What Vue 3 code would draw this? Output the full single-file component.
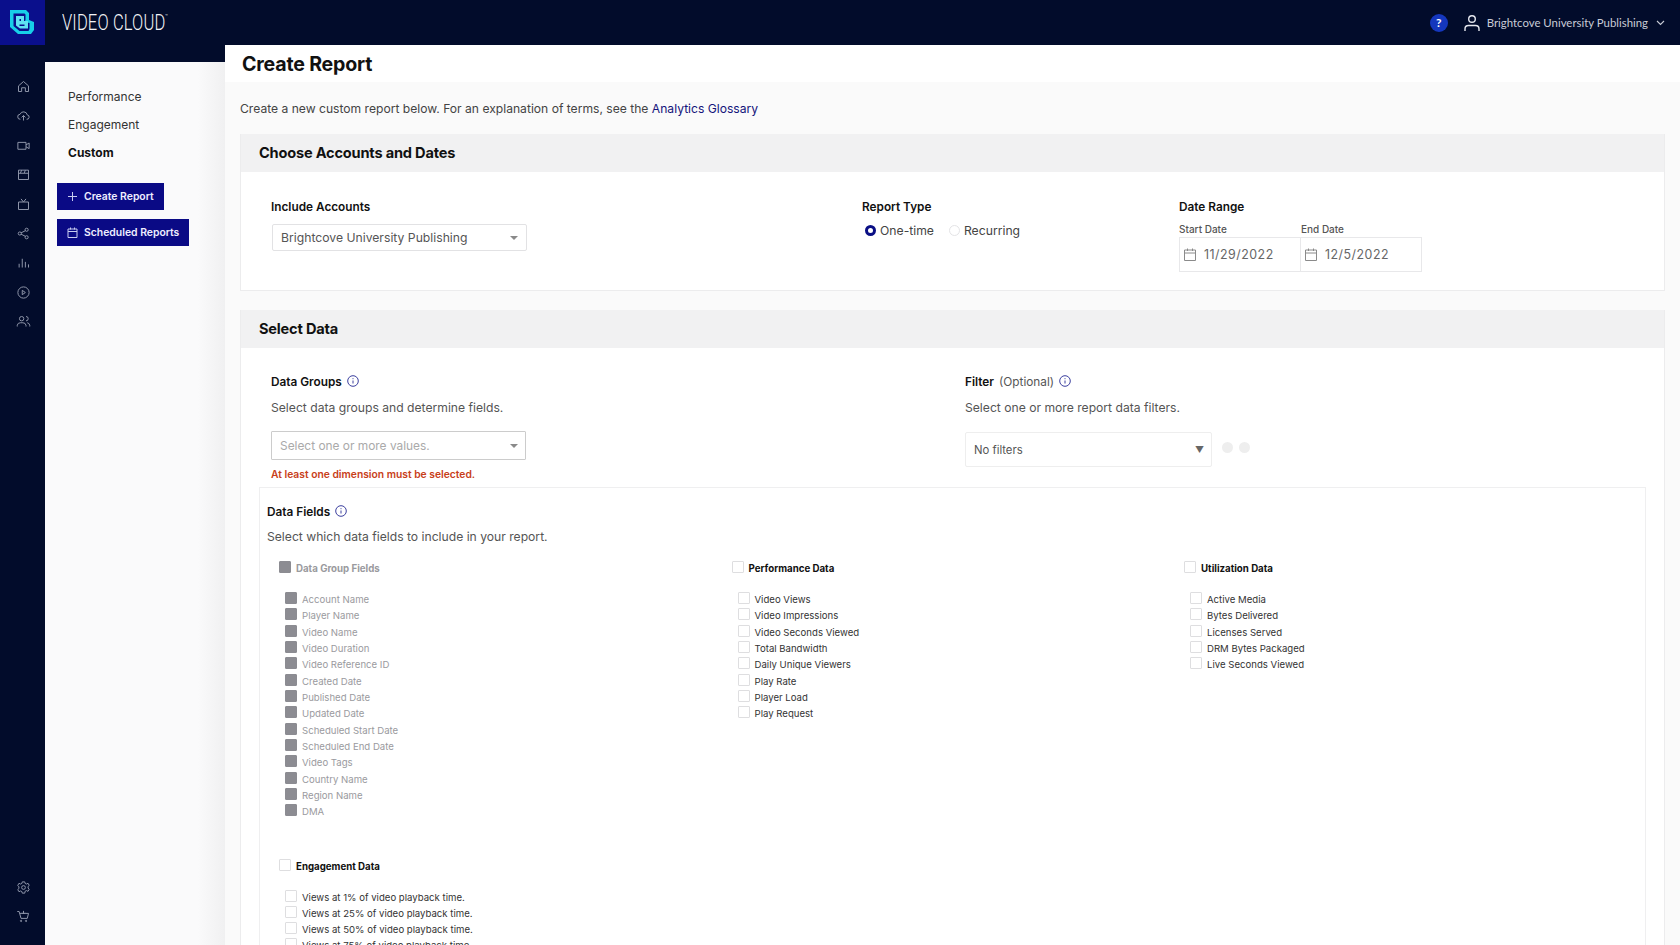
<script setup>
const railTop = [
  'M4 11l8-7 8 7v9h-5v-6H9v6H4z',
  'M7 18a4 4 0 0 1-.5-8 6 6 0 0 1 11.5 1 3.5 3.5 0 0 1-1 7M12 20v-8M9 15l3-3 3 3',
  'M3 7h13v11H3zM16 11l5-3v9l-5-3',
  'M4 5h16v15H4zM4 10h16M9 5l-2 5M15 5l-2 5',
  'M4 8h16v12H4zM8 3l4 5 4-5',
  'M6 9.5a2.5 2.5 0 1 0 0 5 2.5 2.5 0 0 0 0-5zM17 3.5a2.5 2.5 0 1 0 0 5 2.5 2.5 0 0 0 0-5zM17 15.5a2.5 2.5 0 1 0 0 5 2.5 2.5 0 0 0 0-5zM8 11l7-3.5M8 13l7 3.5',
  'M5 20v-6M10 20V6M15 20v-9M20 20v-5',
  'M12 3a9 9 0 1 0 0 18 9 9 0 0 0 0-18zM10 8.500l5 3.500-5 3.500z',
  'M9 4a3.500 3.500 0 1 0 0 7 3.500 3.500 0 0 0 0-7zM2 20v-2a5 5 0 0 1 5-4h4a5 5 0 0 1 5 4v2M16 4a3.500 3.500 0 0 1 0 7M18 14a5 5 0 0 1 4 4v2'
]
const railBottom = [
  'M12 9a3 3 0 1 0 0 6 3 3 0 0 0 0-6zM10 3h4l.6 2.500 2.400 1 2.200-1.300 2 3.500-1.900 1.700v2.600l1.900 1.700-2 3.500-2.200-1.300-2.400 1L14 21h-4l-.6-2.500-2.400-1-2.200 1.300-2-3.500 1.900-1.700v-2.600L2.800 8.700l2-3.500L7 6.500l2.400-1z',
  'M2 4h3l3 11h10l2-8H6M9 19a1 1 0 1 0 0 .1zM17 19a1 1 0 1 0 0 .1zM12 3v5M10 6l2 2 2-2'
]
const nav = ['Performance', 'Engagement', 'Custom']
const groupFields = ['Account Name','Player Name','Video Name','Video Duration','Video Reference ID','Created Date','Published Date','Updated Date','Scheduled Start Date','Scheduled End Date','Video Tags','Country Name','Region Name','DMA']
const perfFields = ['Video Views','Video Impressions','Video Seconds Viewed','Total Bandwidth','Daily Unique Viewers','Play Rate','Player Load','Play Request']
const utilFields = ['Active Media','Bytes Delivered','Licenses Served','DRM Bytes Packaged','Live Seconds Viewed']
const engFields = ['Views at 1% of video playback time.','Views at 25% of video playback time.','Views at 50% of video playback time.','Views at 75% of video playback time.']
const columns = [
  { title: 'Performance Data', items: perfFields },
  { title: 'Utilization Data', items: utilFields }
]
</script>

<template>
  <div class="app">
    <header class="topbar">
      <div class="logo">
        <svg width="25" height="25" viewBox="0 0 25 25" fill="none">
          <path d="M0 0h16l3 3v7l5 2v8l-3 4H8l-8-7z" fill="#17cfe8"/>
          <path d="M3.500 3.500h11l1 1V10l-1 2 5 1v6l-1 2H9.500l-6-5z" fill="#0a0f8c"/>
          <path d="M6 6h8v5h4v7.500H10l-4-3z" fill="#5fe3f2"/>
          <path d="M9.500 9h1.500v2H9.500zM9.500 14.500h5v1.500h-5z" fill="#0a0f8c"/>
        </svg>
      </div>
      <div class="brand">VIDEO CLOUD<sup>™</sup></div>
      <div class="top-right">
        <span class="help">?</span>
        <svg class="user" width="18" height="18" viewBox="0 0 18 18" fill="none" stroke="#e6e8ef" stroke-width="1.400">
          <circle cx="9" cy="5" r="3.300"/><path d="M2 17v-2c0-2 1.500-3.500 3.500-3.500h7c2 0 3.500 1.500 3.500 3.500v2"/>
        </svg>
        <span class="acct">Brightcove University Publishing</span>
        <svg width="9" height="6" viewBox="0 0 9 6" fill="none" stroke="#c8cbd6" stroke-width="1.100"><path d="M1 1l3.500 3.500L8 1"/></svg>
      </div>
    </header>

    <div class="shell">
      <aside class="rail">
        <div class="rail-group">
          <svg v-for="d in railTop" :key="d" width="15" height="15" viewBox="0 0 24 24" fill="none" stroke="#8d94a8" stroke-width="1.600"><path :d="d"/></svg>
        </div>
        <div class="rail-group">
          <svg v-for="d in railBottom" :key="d" width="15" height="15" viewBox="0 0 24 24" fill="none" stroke="#8d94a8" stroke-width="1.600"><path :d="d"/></svg>
        </div>
      </aside>

      <div class="side-wrap">
        <nav class="side">
          <a v-for="n in nav" :key="n" class="nav-item" :class="{ active: n === 'Custom' }">{{ n }}</a>
          <button class="btn first">
            <svg width="11" height="9" viewBox="0 0 11 9" stroke="#c9cdf0" stroke-width="1"><path d="M5.500 0v9M1 4.500h9"/></svg>
            Create Report
          </button>
          <button class="btn">
            <svg width="11" height="11" viewBox="0 0 11 11" fill="none" stroke="#c9cdf0" stroke-width="1"><path d="M1 2h9v8.500H1zM1 4.500h9M3.500.5v2M7.500.5v2"/></svg>
            Scheduled Reports
          </button>
        </nav>
      </div>

      <main class="main">
        <div class="title-band"><h1>Create Report</h1></div>
        <div class="content">
          <p class="intro">Create a new custom report below. For an explanation of terms, see the <a>Analytics Glossary</a></p>

          <section class="card">
            <h2>Choose Accounts and Dates</h2>
            <div class="card1-body">
              <div>
                <label class="lbl">Include Accounts</label>
                <div class="select acct-select"><span>Brightcove University Publishing</span><i class="caret"></i></div>
              </div>
              <div>
                <label class="lbl">Report Type</label>
                <div class="radios">
                  <span class="radio on"></span><span class="radio-text first">One-time</span>
                  <span class="radio"></span><span class="radio-text">Recurring</span>
                </div>
              </div>
              <div>
                <label class="lbl">Date Range</label>
                <div class="dates">
                  <div v-for="d in [['Start Date','11/29/2022'],['End Date','12/5/2022']]" :key="d[0]" class="date-col">
                    <span class="date-lbl">{{ d[0] }}</span>
                    <div class="date-input">
                      <svg width="12" height="13" viewBox="0 0 12 13" fill="none" stroke="#8a8a8a" stroke-width="1"><path d="M.5 2h11v10.500H.5zM.5 5h11M3.500.5v2.500M8.500.5v2.500"/></svg>
                      <span>{{ d[1] }}</span>
                    </div>
                  </div>
                </div>
              </div>
            </div>
          </section>

          <section class="card second">
            <h2>Select Data</h2>
            <div class="card2-body">
              <div class="card2-top">
                <div>
                  <div class="lbl with-info">Data Groups
                    <svg class="info" width="12" height="12" viewBox="0 0 12 12" fill="none" stroke="#3b3f9e"><circle cx="6" cy="6" r="5.300"/><path d="M6 5.500v3M6 3.200v1"/></svg>
                  </div>
                  <p class="sub">Select data groups and determine fields.</p>
                  <div class="select groups-select"><span>Select one or more values.</span><i class="caret"></i></div>
                  <p class="err">At least one dimension must be selected.</p>
                </div>
                <div>
                  <div class="lbl with-info">Filter <span class="opt">(Optional)</span>
                    <svg class="info" width="12" height="12" viewBox="0 0 12 12" fill="none" stroke="#3b3f9e"><circle cx="6" cy="6" r="5.300"/><path d="M6 5.500v3M6 3.200v1"/></svg>
                  </div>
                  <p class="sub">Select one or more report data filters.</p>
                  <div class="filter-row">
                    <div class="select filter-select"><span>No filters</span><b>▼</b></div>
                    <i class="dot"></i><i class="dot"></i>
                  </div>
                </div>
              </div>

              <div class="fields">
                <div class="lbl with-info">Data Fields
                  <svg class="info" width="12" height="12" viewBox="0 0 12 12" fill="none" stroke="#3b3f9e"><circle cx="6" cy="6" r="5.300"/><path d="M6 5.500v3M6 3.200v1"/></svg>
                </div>
                <p class="sub tight">Select which data fields to include in your report.</p>
                <div class="field-grid">
                  <div class="col disabled">
                    <div class="head"><i class="cb"></i><span>Data Group Fields</span></div>
                    <div class="list">
                      <div v-for="f in groupFields" :key="f" class="item"><i class="cb"></i><span>{{ f }}</span></div>
                    </div>
                  </div>
                  <div v-for="c in columns" :key="c.title" class="col">
                    <div class="head"><i class="cb"></i><span>{{ c.title }}</span></div>
                    <div class="list">
                      <div v-for="f in c.items" :key="f" class="item"><i class="cb"></i><span>{{ f }}</span></div>
                    </div>
                  </div>
                  <div class="col engagement">
                    <div class="head"><i class="cb"></i><span>Engagement Data</span></div>
                    <div class="list">
                      <div v-for="f in engFields" :key="f" class="item"><i class="cb"></i><span>{{ f }}</span></div>
                    </div>
                  </div>
                </div>
              </div>
            </div>
          </section>
        </div>
      </main>
    </div>
  </div>
</template>

<style>
html, body { margin: 0; height: 100%; overflow: hidden; }
</style>

<style scoped>
.app { width: 1680px; height: 945px; overflow: hidden; font-family: Inter, "Noto Sans", sans-serif; color: #111; display: flex; flex-direction: column; background: #020c2b; }
.topbar { height: 45px; flex: none; display: flex; align-items: center; background: #020c2b; }
.logo { width: 45px; height: 45px; background: #0a0f8c; display: flex; align-items: center; justify-content: center; }
.brand { margin-left: 17px; color: #f2f3f6; font-family: Roboto, sans-serif; font-weight: 300; font-size: 22px; transform: scaleX(.75); transform-origin: left center; white-space: nowrap; letter-spacing: .2px; }
.brand sup { font-size: 6px; vertical-align: 12px; }
.top-right { margin-left: auto; display: flex; align-items: center; padding-right: 15px; }
.help { width: 18px; height: 18px; border-radius: 50%; background: #1537bd; color: #fff; font: 700 12px/18px Lato, sans-serif; text-align: center; }
.user { margin-left: 15px; }
.acct { margin: 0 8px 0 6px; color: #c8cbd6; font: 400 11.400px Lato, sans-serif; white-space: nowrap; }
.shell { flex: 1; display: flex; min-height: 0; }
.rail { width: 45px; flex: none; display: flex; flex-direction: column; justify-content: space-between; align-items: center; padding: 34px 0 21px 1px; box-sizing: border-box; }
.rail-group { display: flex; flex-direction: column; gap: 14.400px; }
.rail-group svg { display: block; }
.side-wrap { width: 180px; flex: none; padding-top: 17px; box-sizing: border-box; }
.side { height: 100%; box-sizing: border-box; padding: 21px 0 0 12px; background: linear-gradient(90deg, #fafafb 0, #fafafb 85%, #f0f0f1 100%); display: flex; flex-direction: column; align-items: flex-start; }
.nav-item { font-size: 12px; color: #333; height: 28.200px; line-height: 28px; padding-left: 11px; }
.nav-item.active { font-weight: 700; color: #111; }
.btn { height: 27px; margin-bottom: 9px; padding: 0 10px; border: 0; background: #0a0a85; color: #eef; font: 600 10.400px Inter, sans-serif; display: flex; align-items: center; gap: 6px; white-space: nowrap; }
.btn.first { margin-top: 15px; }
.main { flex: 1; min-width: 0; background: #fafafa; }
.title-band { height: 37px; background: #fff; display: flex; align-items: center; }
h1 { margin: 0 0 0 17px; font-size: 19.600px; font-weight: 700; letter-spacing: -.2px; line-height: 34px; }
.content { padding: 0 15px; }
.intro { margin: 0; height: 52px; line-height: 53px; font-size: 12.120px; color: #444; }
.intro a { color: #14147a; }
.card { background: #fff; border: 1px solid #ececed; border-top: 0; }
.card.second { margin-top: 19px; }
h2 { margin: 0; height: 38px; line-height: 38px; padding-left: 18px; background: #f1f1f2; font-size: 14.600px; font-weight: 700; letter-spacing: -.2px; }
.card1-body { display: grid; grid-template-columns: 591px 317px 1fr; padding: 27px 0 18px 30px; height: 118px; box-sizing: border-box; }
.lbl { display: block; font-size: 11.800px; font-weight: 600; color: #111; line-height: 16px; }
.select { display: flex; align-items: center; justify-content: space-between; box-sizing: border-box; background: #fff; border: 1px solid #e2e2e4; font-size: 12.200px; color: #555; }
.acct-select { width: 255px; height: 27px; margin: 9px 0 0 1px; padding: 0 8px; border-radius: 2px; }
.caret { width: 0; height: 0; border: 4px solid transparent; border-top: 4px solid #8a8a8a; border-bottom: 0; margin-right: 0; }
.radios { display: flex; align-items: center; margin: 8px 0 0 3px; }
.radio { width: 11px; height: 11px; border-radius: 50%; border: 1px solid #e4e4e6; box-sizing: border-box; }
.radio.on { border: 3px solid #0a0f85; }
.radio-text { font-size: 12.200px; color: #444; margin-left: 4px; }
.radio-text.first { margin-right: 15px; }
.dates { display: flex; margin-top: 7px; }
.date-col { display: flex; flex-direction: column; }
.date-lbl { font-size: 10px; font-weight: 500; color: #555; line-height: 15px; }
.date-input { width: 122px; height: 35px; box-sizing: border-box; border: 1px solid #e8e8ea; display: flex; align-items: center; gap: 8px; padding-left: 4px; font-size: 12.400px; color: #666; letter-spacing: .5px; }
.date-col:last-child .date-input { width: 121px; border-left: 0; }
.card2-body { padding: 26px 18px 0 18px; }
.card2-top { display: grid; grid-template-columns: 694px 1fr; padding-left: 12px; height: 113px; }
.with-info { display: flex; align-items: center; gap: 5px; font-size: 11.800px; }
.info { margin-top: -2px; }
.opt { font-weight: 400; color: #555; font-size: 11.800px; }
.sub { margin: 10px 0 0; font-size: 12.150px; line-height: 16px; color: #555; }
.sub.tight { margin-top: 9px; }
.groups-select { width: 255px; height: 29px; margin-top: 15px; padding: 0 7px 0 8px; color: #aaa; border-color: #ccc; border-radius: 1px; font-size: 11.900px; }
.err { margin: 7px 0 0; font-size: 10.300px; font-weight: 600; color: #c8401a; line-height: 14px; }
.filter-row { display: flex; align-items: center; margin-top: 16px; gap: 6px; }
.filter-select { width: 247px; height: 35px; margin-right: 4px; padding: 0 7px 0 8px; font-size: 11.300px; border-color: #eee; border-radius: 2px; }
.filter-select b { font-size: 9px; font-weight: 400; color: #666; }
.dot { width: 11px; height: 11px; border-radius: 50%; background: #eee; margin-top: -4px; }
.fields { border: 1px solid #efeff0; padding: 16px 7px 0; height: 460px; box-sizing: border-box; }
.field-grid { display: grid; grid-template-columns: repeat(3, 452.500px); padding: 16px 0 0 12px; }
.field-grid .engagement { grid-column: 1; margin-top: .5px; }
.head { display: flex; align-items: flex-start; gap: 5px; height: 31px; font-size: 9.700px; font-weight: 700; color: #111; }
.head span { line-height: 14px; padding-top: 1px; }
.list { padding-left: 6px; height: 265px; }
.engagement .list { height: auto; }
.col:nth-child(-n+3) { height: 297px; }
.item { display: flex; align-items: flex-start; height: 16.330px; gap: 5px; font-size: 9.600px; color: #333; }
.item span { line-height: 15px; }
.cb { display: block; width: 12px; height: 12px; flex: none; box-sizing: border-box; border: 1px solid #dedee0; border-radius: 1px; background: #fff; }
.disabled .cb { background: #8c8c92; border-color: #8c8c92; }
.disabled span { color: #9a9a9e; }
</style>
